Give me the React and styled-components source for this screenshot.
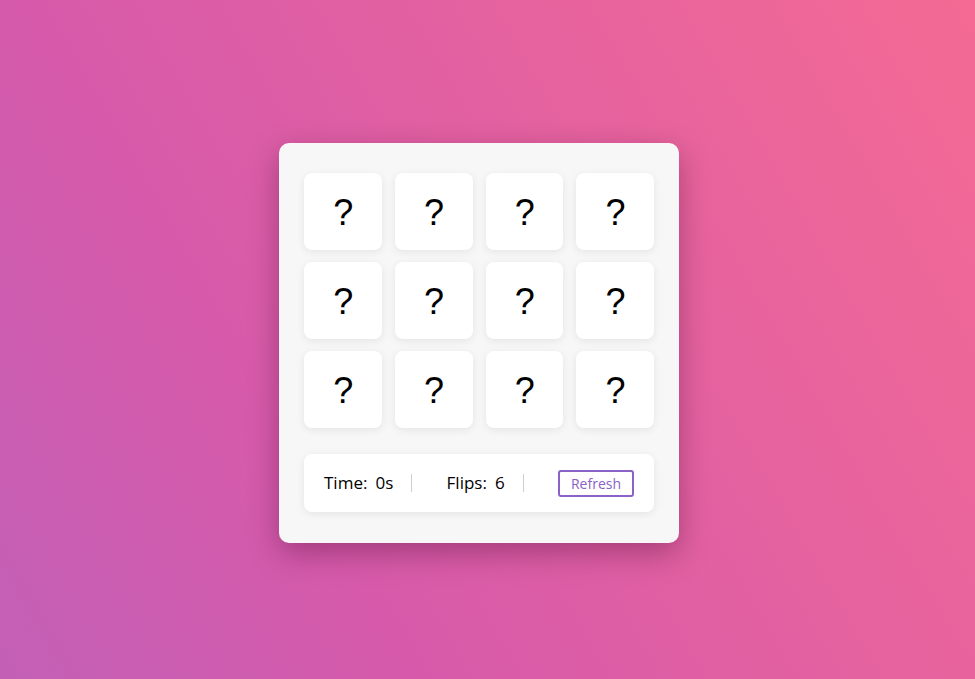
import React from 'react';
import styled, { createGlobalStyle } from 'styled-components';

const GlobalStyle = createGlobalStyle`
  html, body {
    margin: 0;
    padding: 0;
    height: 100%;
  }

  body {
    font-family: 'Open Sans', 'Noto Sans', sans-serif;
    background: linear-gradient(60deg, #c260b6 0%, #d65aab 29%, #f46a94 100%);
    overflow: hidden;
  }
`;

const Page = styled.main`
  box-sizing: border-box;
  display: flex;
  align-items: center;
  justify-content: center;
  width: 100vw;
  height: 100vh;
  padding: 7px 17px 0 0;
`;

const Game = styled.section`
  box-sizing: border-box;
  width: 400px;
  height: 400px;
  padding: 30px 25px 31px;
  background: #f7f7f7;
  border-radius: 10px;
  box-shadow: 0 10px 30px rgba(60, 0, 40, 0.35);
  display: flex;
  flex-direction: column;
`;

const Board = styled.div`
  display: grid;
  grid-template-columns: repeat(4, 1fr);
  grid-auto-rows: 77px;
  column-gap: 13px;
  row-gap: 12px;
`;

const Card = styled.button`
  display: flex;
  align-items: center;
  justify-content: center;
  padding: 2px 0 0 1px;
  border: none;
  border-radius: 8px;
  background: #fff;
  box-shadow: 0 2px 8px rgba(0, 0, 0, 0.08);
  font-family: 'Liberation Sans', Arial, sans-serif;
  font-size: 36px;
  line-height: 1;
  color: #000;
  cursor: pointer;
`;

const Footer = styled.footer`
  box-sizing: border-box;
  margin-top: auto;
  height: 58px;
  padding: 0 20px;
  display: flex;
  align-items: center;
  justify-content: space-between;
  background: #fff;
  border-radius: 8px;
  box-shadow: 0 2px 8px rgba(0, 0, 0, 0.08);
`;

const Stat = styled.div`
  display: flex;
  gap: 8px;
  padding-right: 18px;
  border-right: 1px solid #cfcfcf;
  font-size: 17px;
  line-height: 18px;
  color: #000;
`;

const RefreshButton = styled.button`
  box-sizing: border-box;
  width: 76px;
  height: 27px;
  padding: 0;
  background: transparent;
  border: 2px solid #8a62c8;
  border-radius: 3px;
  color: #8a62c8;
  font-family: 'Open Sans', 'Noto Sans', sans-serif;
  font-size: 14px;
  cursor: pointer;
`;

const cards = Array.from({ length: 12 }, (_, i) => i);

const App = () => (
  <>
    <GlobalStyle />
    <Page>
      <Game>
        <Board>
          {cards.map((i) => (
            <Card key={i}>?</Card>
          ))}
        </Board>
        <Footer>
          <Stat>
            <span>Time:</span>
            <span>0s</span>
          </Stat>
          <Stat>
            <span>Flips:</span>
            <span>6</span>
          </Stat>
          <RefreshButton>Refresh</RefreshButton>
        </Footer>
      </Game>
    </Page>
  </>
);

export default App;
